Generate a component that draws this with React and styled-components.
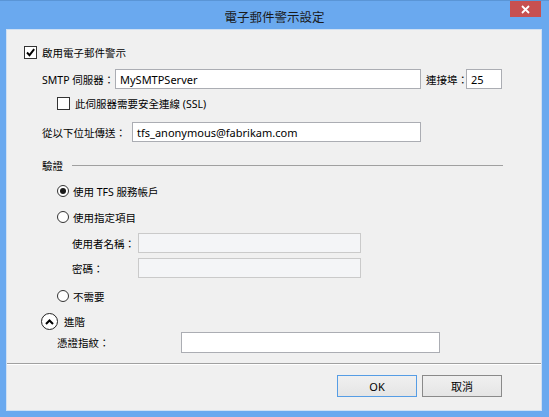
import React from "react";
import styled, { createGlobalStyle } from "styled-components";

const GlobalStyle = createGlobalStyle`
  html, body {
    margin: 0;
    padding: 0;
    background: #ffffff;
  }
  body {
    font-family: "Noto Sans", "Noto Sans CJK TC", sans-serif;
    color: #000000;
  }
`;

const App = () => {
  return (
    <>
      <GlobalStyle />
      <Window>
        <TitleBar>
          <span />
          <Title>電子郵件警示設定</Title>
          <CloseButton aria-label="close">
            <svg width="9" height="9" viewBox="0 0 9 9">
              <path d="M1 1 L8 8 M8 1 L1 8" stroke="#fff" strokeWidth="1.8" />
            </svg>
          </CloseButton>
        </TitleBar>

        <Panel>
          <Body>
            <Row top={16} indent={17} height={13}>
              <CheckBox checked />
              <Label gap={5}>啟用電子郵件警示</Label>
            </Row>

            <Row top={10} indent={35} height={20}>
              <Label width={73}>SMTP 伺服器：</Label>
              <TextBox width={306}>MySMTPServer</TextBox>
              <Label gap={5} width={40}>連接埠：</Label>
              <TextBox width={36}>25</TextBox>
            </Row>

            <Row top={8} indent={50} height={13}>
              <CheckBox />
              <Label gap={5}>此伺服器需要安全連線 (SSL)</Label>
            </Row>

            <Row top={12} indent={35} height={20}>
              <Label width={90}>從以下位址傳送：</Label>
              <TextBox width={289}>tfs_anonymous@fabrikam.com</TextBox>
            </Row>

            <Row top={16} indent={35} height={14}>
              <Label width={30}>驗證</Label>
              <Rule />
            </Row>

            <Row top={13} indent={50} height={12}>
              <Radio checked />
              <Label gap={4}>使用 TFS 服務帳戶</Label>
            </Row>

            <Row top={14} indent={50} height={12}>
              <Radio />
              <Label gap={4}>使用指定項目</Label>
            </Row>

            <Row top={10} indent={65} height={20}>
              <Label width={66}>使用者名稱：</Label>
              <TextBox width={223} disabled />
            </Row>

            <Row top={5} indent={65} height={20}>
              <Label width={66}>密碼：</Label>
              <TextBox width={223} disabled />
            </Row>

            <Row top={12} indent={50} height={12}>
              <Radio />
              <Label gap={4}>不需要</Label>
            </Row>

            <Row top={11} indent={34} height={17}>
              <Expander>
                <svg width="9" height="6" viewBox="0 0 9 6">
                  <path d="M1 5 L4.5 1.5 L8 5" stroke="#000" strokeWidth="2" fill="none" />
                </svg>
              </Expander>
              <Label gap={6}>進階</Label>
            </Row>

            <Row top={2} indent={50} height={21}>
              <Label width={124}>憑證指紋：</Label>
              <TextBox width={259} />
            </Row>
          </Body>

          <Footer>
            <Button primary>OK</Button>
            <Button>取消</Button>
          </Footer>
        </Panel>
      </Window>
    </>
  );
};

const CheckBox = ({ checked }) => (
  <Box>
    {checked && (
      <svg width="11" height="11" viewBox="0 0 11 11">
        <path d="M2 5.5 L4.5 8.2 L9.2 2.2" stroke="#000" strokeWidth="1.9" fill="none" />
      </svg>
    )}
  </Box>
);

const Radio = ({ checked }) => <RadioCircle>{checked && <Dot />}</RadioCircle>;

const Window = styled.div`
  width: 549px;
  height: 417px;
  background: #6aa9ef;
  display: flex;
  flex-direction: column;
  box-sizing: border-box;
  border-top: 1px solid #5a95d6;
`;

const TitleBar = styled.div`
  height: 29px;
  display: grid;
  grid-template-columns: 1fr auto 1fr;
  align-items: center;
`;

const Title = styled.div`
  font-family: "Noto Sans CJK TC", sans-serif;
  font-size: 12.5px;
  color: #1a1a1a;
  padding-top: 1px;
`;

const CloseButton = styled.div`
  justify-self: end;
  align-self: start;
  width: 31px;
  height: 16px;
  margin-right: 8px;
  background: #c75050;
  display: flex;
  align-items: center;
  justify-content: center;
`;

const Panel = styled.div`
  flex: 1;
  margin: 0 8px 7px 7px;
  background: #f0f0f0;
  display: flex;
  flex-direction: column;
  box-shadow: 0 0 0 1px #cfe0f3;
`;

const Body = styled.div`
  display: flex;
  flex-direction: column;
  height: 333px;
`;

const Row = styled.div`
  display: flex;
  align-items: center;
  margin-top: ${(p) => p.top}px;
  padding-left: ${(p) => p.indent}px;
  height: ${(p) => p.height}px;
  padding-right: 38px;
`;

const Label = styled.span`
  font-size: 10.5px;
  white-space: nowrap;
  margin-left: ${(p) => p.gap || 0}px;
  width: ${(p) => (p.width ? `${p.width}px` : "auto")};
  flex-shrink: 0;
`;

const TextBox = styled.div`
  box-sizing: border-box;
  width: ${(p) => p.width}px;
  height: 100%;
  border: 1px solid ${(p) => (p.disabled ? "#cacaca" : "#abadb3")};
  background: ${(p) => (p.disabled ? "#f4f5f7" : "#ffffff")};
  font-size: 11px;
  padding-left: 4px;
  display: flex;
  align-items: center;
  flex-shrink: 0;
`;

const Box = styled.div`
  box-sizing: border-box;
  width: 13px;
  height: 13px;
  border: 1px solid #333333;
  background: #ffffff;
  display: flex;
  align-items: center;
  justify-content: center;
  flex-shrink: 0;
`;

const RadioCircle = styled.div`
  box-sizing: border-box;
  width: 12px;
  height: 12px;
  border-radius: 50%;
  border: 1px solid #333333;
  background: #ffffff;
  display: flex;
  align-items: center;
  justify-content: center;
  flex-shrink: 0;
`;

const Dot = styled.div`
  width: 6px;
  height: 6px;
  border-radius: 50%;
  background: #1a1a1a;
`;

const Rule = styled.div`
  flex: 1;
  height: 1px;
  background: #a0a0a0;
`;

const Expander = styled.div`
  box-sizing: border-box;
  width: 17px;
  height: 17px;
  border-radius: 50%;
  border: 1.5px solid #222222;
  background: #ffffff;
  display: flex;
  align-items: center;
  justify-content: center;
  flex-shrink: 0;
`;

const Footer = styled.div`
  flex: 1;
  border-top: 1px solid #a0a0a0;
  box-shadow: inset 0 1px 0 #ffffff;
  display: flex;
  justify-content: flex-end;
  align-items: flex-start;
  gap: 5px;
  padding: 11px 39px 0 0;
`;

const Button = styled.div`
  box-sizing: border-box;
  width: 80px;
  height: 22px;
  border: 1px solid ${(p) => (p.primary ? "#569de5" : "#8a8a8a")};
  background: linear-gradient(#f0f0f0, #e5e5e5);
  font-size: 11px;
  display: flex;
  align-items: center;
  justify-content: center;
`;

export default App;
